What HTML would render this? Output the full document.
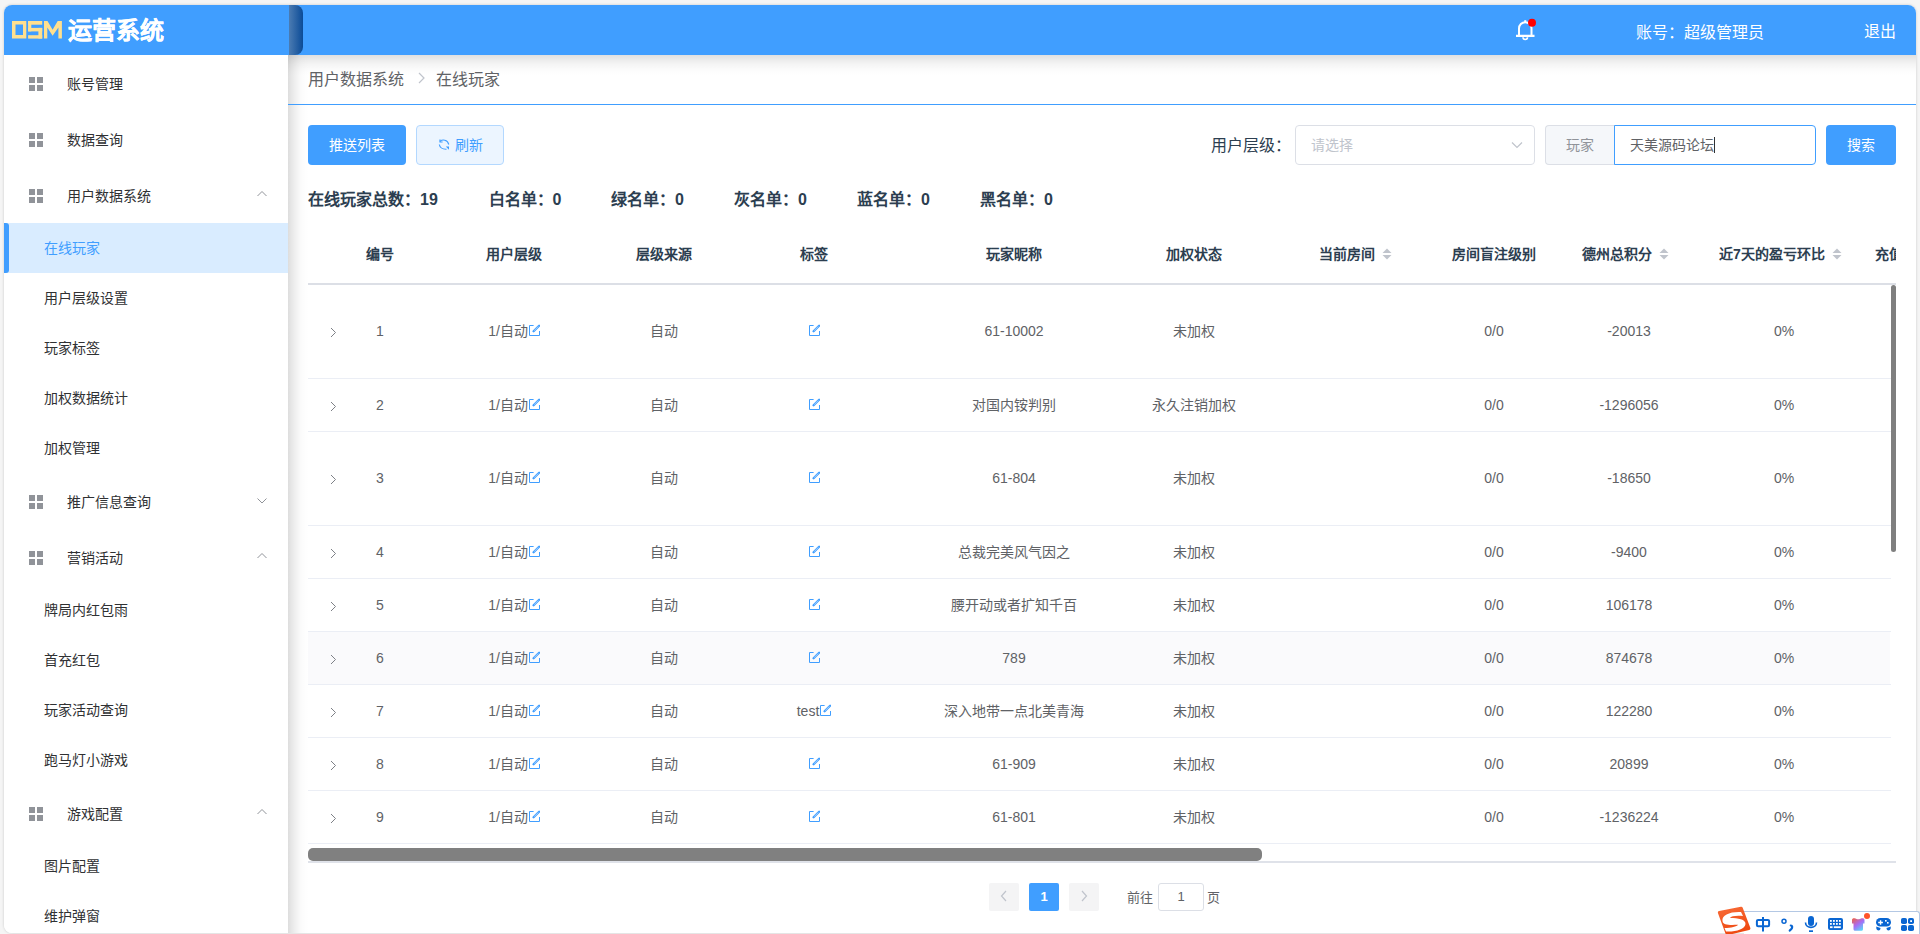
<!DOCTYPE html><html lang="zh-CN"><head><meta charset="utf-8"><style>
*{margin:0;padding:0;box-sizing:border-box}
html,body{width:1920px;height:934px;overflow:hidden;background:#f5f5f5;font-family:"Liberation Sans", sans-serif}
.abs{position:absolute}
#app{position:absolute;left:4px;top:5px;width:1912px;height:928px;background:#fff;border-radius:8px;overflow:hidden;box-shadow:0 0 3px rgba(0,0,0,.18)}
#hdr{position:absolute;left:0;top:0;width:1912px;height:50px;background:#409eff;z-index:3}
#side{position:absolute;left:0;top:50px;width:284px;height:878px;background:#fff;z-index:2}
.mi{position:absolute;left:0;width:284px;font-size:14px;color:#303133}
.mt{position:absolute;left:63px}
.si{position:absolute;left:0;width:284px;font-size:14px;color:#303133}
.st{position:absolute;left:40px}
#main{position:absolute;left:284px;top:50px;width:1628px;height:878px;background:#fff}
.btn{position:absolute;border-radius:4px;font-size:14px;text-align:center}
.cell{position:absolute;text-align:center;font-size:14px;color:#606266;white-space:nowrap}
.hc{position:absolute;text-align:center;font-size:14px;color:#2c3e50;font-weight:bold;white-space:nowrap}
.ed{display:inline-block;vertical-align:0px;margin-left:0}
.stat{position:absolute;top:0;font-size:16px;font-weight:bold;color:#2c3e50;white-space:nowrap}
.sort{display:inline-block;position:relative;width:24px;height:14px;vertical-align:middle}
</style></head><body>
<div id="app">
<div id="hdr">
<svg class="abs" style="left:8px;top:16px" width="50" height="18" viewBox="0 0 50 18"><g fill="#ffe08f"><path fill-rule="evenodd" d="M0 0 H14.3 V17.5 H0 Z M3.5 3.6 V13.9 H11 V3.6 Z"/><rect x="16.1" y="0" width="14.1" height="3.7"/><rect x="16.1" y="0" width="3.2" height="10.4"/><rect x="16.1" y="6.9" width="14.1" height="3.5"/><rect x="26.4" y="6.9" width="3.8" height="10.6"/><rect x="16.1" y="14.2" width="14.1" height="3.4"/><path d="M32 0 H35.5 L40.6 8.7 L45.7 0 H49.9 V17.6 H46.4 V6.5 L40.6 14.8 L35.3 6.5 V17.6 H32 Z"/></g></svg>
<div class="abs" style="left:64px;top:12px;font-size:24px;font-weight:bold;color:#fff;line-height:28px;-webkit-text-stroke:0.3px #fff">运营系统</div>
<div class="abs" style="left:285px;top:0;width:14px;height:50px;border-radius:0 8px 8px 0;background:linear-gradient(90deg,#4b7bb2,#0b4b97)"></div>
<svg class="abs" style="left:1510px;top:12px" width="24" height="28" viewBox="0 0 24 28"><path d="M5 18.5 V11.5 A6.25 6.25 0 0 1 17.5 11.5 V18.5" fill="none" stroke="#fff" stroke-width="2"/><rect x="10.25" y="3.2" width="2" height="2.6" fill="#fff"/><path d="M2 18.9 H20.5" stroke="#fff" stroke-width="2.2"/><path d="M9 20.2 A2.25 2.25 0 0 0 13.5 20.2" fill="none" stroke="#fff" stroke-width="1.6"/><circle cx="18" cy="5.8" r="4" fill="#f00"/></svg>
<div class="abs" style="left:1632px;top:18px;font-size:16px;color:#fff;line-height:20px">账号：超级管理员</div>
<div class="abs" style="left:1860px;top:17px;font-size:16px;color:#fff;line-height:20px">退出</div>
</div>
<div id="side">
<div class="mi" style="top:0px;height:56px;line-height:56px">
<svg style="position:absolute;left:25px;top:22px" width="14" height="14" viewBox="0 0 14 14"><rect x="0" y="0" width="6" height="6" fill="#909399"/><rect x="8" y="0" width="6" height="6" fill="#909399"/><rect x="0" y="8" width="6" height="6" fill="#909399"/><rect x="8" y="8" width="6" height="6" fill="#909399"/></svg>
<span class="mt" style="top:1px">账号管理</span>
</div>
<div class="mi" style="top:56px;height:56px;line-height:56px">
<svg style="position:absolute;left:25px;top:22px" width="14" height="14" viewBox="0 0 14 14"><rect x="0" y="0" width="6" height="6" fill="#909399"/><rect x="8" y="0" width="6" height="6" fill="#909399"/><rect x="0" y="8" width="6" height="6" fill="#909399"/><rect x="8" y="8" width="6" height="6" fill="#909399"/></svg>
<span class="mt" style="top:1px">数据查询</span>
</div>
<div class="mi" style="top:112px;height:56px;line-height:56px">
<svg style="position:absolute;left:25px;top:22px" width="14" height="14" viewBox="0 0 14 14"><rect x="0" y="0" width="6" height="6" fill="#909399"/><rect x="8" y="0" width="6" height="6" fill="#909399"/><rect x="0" y="8" width="6" height="6" fill="#909399"/><rect x="8" y="8" width="6" height="6" fill="#909399"/></svg>
<span class="mt" style="top:1px">用户数据系统</span>
<svg style="position:absolute;left:253px;top:24px" width="10" height="6" viewBox="0 0 10 6"><path d="M0.5 5 L5 0.5 L9.5 5" fill="none" stroke="#909399" stroke-width="1"/></svg>
</div>
<div class="si" style="top:168px;height:50px;line-height:50px;background:#d9ecff;color:#409eff"><div class="abs" style="left:0;top:0;width:5px;height:50px;background:#409eff;border-radius:0 3px 3px 0"></div><span class="st">在线玩家</span></div>
<div class="si" style="top:218px;height:50px;line-height:50px"><span class="st">用户层级设置</span></div>
<div class="si" style="top:268px;height:50px;line-height:50px"><span class="st">玩家标签</span></div>
<div class="si" style="top:318px;height:50px;line-height:50px"><span class="st">加权数据统计</span></div>
<div class="si" style="top:368px;height:50px;line-height:50px"><span class="st">加权管理</span></div>
<div class="mi" style="top:418px;height:56px;line-height:56px">
<svg style="position:absolute;left:25px;top:22px" width="14" height="14" viewBox="0 0 14 14"><rect x="0" y="0" width="6" height="6" fill="#909399"/><rect x="8" y="0" width="6" height="6" fill="#909399"/><rect x="0" y="8" width="6" height="6" fill="#909399"/><rect x="8" y="8" width="6" height="6" fill="#909399"/></svg>
<span class="mt" style="top:1px">推广信息查询</span>
<svg style="position:absolute;left:253px;top:25px" width="10" height="6" viewBox="0 0 10 6"><path d="M0.5 0.5 L5 5 L9.5 0.5" fill="none" stroke="#909399" stroke-width="1"/></svg>
</div>
<div class="mi" style="top:474px;height:56px;line-height:56px">
<svg style="position:absolute;left:25px;top:22px" width="14" height="14" viewBox="0 0 14 14"><rect x="0" y="0" width="6" height="6" fill="#909399"/><rect x="8" y="0" width="6" height="6" fill="#909399"/><rect x="0" y="8" width="6" height="6" fill="#909399"/><rect x="8" y="8" width="6" height="6" fill="#909399"/></svg>
<span class="mt" style="top:1px">营销活动</span>
<svg style="position:absolute;left:253px;top:24px" width="10" height="6" viewBox="0 0 10 6"><path d="M0.5 5 L5 0.5 L9.5 5" fill="none" stroke="#909399" stroke-width="1"/></svg>
</div>
<div class="si" style="top:530px;height:50px;line-height:50px"><span class="st">牌局内红包雨</span></div>
<div class="si" style="top:580px;height:50px;line-height:50px"><span class="st">首充红包</span></div>
<div class="si" style="top:630px;height:50px;line-height:50px"><span class="st">玩家活动查询</span></div>
<div class="si" style="top:680px;height:50px;line-height:50px"><span class="st">跑马灯小游戏</span></div>
<div class="mi" style="top:730px;height:56px;line-height:56px">
<svg style="position:absolute;left:25px;top:22px" width="14" height="14" viewBox="0 0 14 14"><rect x="0" y="0" width="6" height="6" fill="#909399"/><rect x="8" y="0" width="6" height="6" fill="#909399"/><rect x="0" y="8" width="6" height="6" fill="#909399"/><rect x="8" y="8" width="6" height="6" fill="#909399"/></svg>
<span class="mt" style="top:1px">游戏配置</span>
<svg style="position:absolute;left:253px;top:24px" width="10" height="6" viewBox="0 0 10 6"><path d="M0.5 5 L5 0.5 L9.5 5" fill="none" stroke="#909399" stroke-width="1"/></svg>
</div>
<div class="si" style="top:786px;height:50px;line-height:50px"><span class="st">图片配置</span></div>
<div class="si" style="top:836px;height:50px;line-height:50px"><span class="st">维护弹窗</span></div>
</div>
<div id="main">
<div class="abs" style="left:0;top:0;width:22px;height:878px;background:linear-gradient(to right,rgba(0,0,0,.135),rgba(0,0,0,.09) 4px,rgba(0,0,0,.055) 8px,rgba(0,0,0,.025) 12px,rgba(0,0,0,.008) 16px,rgba(0,0,0,0) 21px)"></div>
<div class="abs" style="left:0;top:0;width:1628px;height:22px;background:linear-gradient(to bottom,rgba(0,0,0,.12),rgba(0,0,0,.075) 5px,rgba(0,0,0,.045) 9px,rgba(0,0,0,.022) 13px,rgba(0,0,0,.008) 17px,rgba(0,0,0,0) 21px)"></div>
<div class="abs" style="left:20px;top:15px;font-size:16px;line-height:20px;color:#606266;white-space:nowrap">用户数据系统<svg style="display:inline-block;vertical-align:0px;margin:0 10px 0 14px" width="8" height="14" viewBox="0 0 8 14"><path d="M1 2 L6 7 L1 12" fill="none" stroke="#c0c4cc" stroke-width="1.2"/></svg>在线玩家</div>
<div class="abs" style="left:0;top:49px;width:1628px;height:1px;background:#409eff"></div>
<div class="btn" style="left:20px;top:70px;width:98px;height:40px;line-height:40px;background:#409eff;color:#fff">推送列表</div>
<div class="btn" style="left:128px;top:70px;width:88px;height:40px;line-height:38px;background:#ecf5ff;border:1px solid #b3d8ff;color:#409eff"><svg style="display:inline-block;vertical-align:0px;margin-right:5px" width="12" height="12" viewBox="0 0 12 12"><path d="M2 3.3 C4.5 1.2 9.5 1.5 10.8 6.5" fill="none" stroke="#409eff" stroke-width="1.1"/><path d="M2 1.5 V4 H4.6" fill="none" stroke="#409eff" stroke-width="1.2"/><path d="M1.3 6.5 C2 10.5 5 11.3 8.5 11.2" fill="none" stroke="#409eff" stroke-width="1.1"/><path d="M7.8 8.6 H11 V11.8 Z" fill="#409eff"/></svg>刷新</div>
<div class="abs" style="left:923px;top:81px;font-size:16px;line-height:20px;color:#2c3e50">用户层级：</div>
<div class="abs" style="left:1007px;top:70px;width:240px;height:40px;border:1px solid #dcdfe6;border-radius:4px;font-size:14px;line-height:38px;color:#c0c4cc;padding-left:15px">请选择<svg class="abs" style="right:11px;top:15px" width="12" height="8" viewBox="0 0 12 8"><path d="M1 1.5 L6 6.5 L11 1.5" fill="none" stroke="#c0c4cc" stroke-width="1.2"/></svg></div>
<div class="abs" style="left:1257px;top:70px;width:70px;height:40px;border:1px solid #dcdfe6;border-right:0;border-radius:4px 0 0 4px;background:#f5f7fa;font-size:14px;line-height:38px;color:#909399;text-align:center;padding-right:2px">玩家</div>
<div class="abs" style="left:1326px;top:70px;width:202px;height:40px;border:1px solid #409eff;border-radius:0 4px 4px 0;font-size:14px;line-height:38px;color:#606266;padding-left:15px">天美源码论坛<span style="display:inline-block;width:1px;height:16px;background:#303133;vertical-align:-3px"></span></div>
<div class="btn" style="left:1538px;top:70px;width:70px;height:40px;line-height:40px;background:#409eff;color:#fff">搜索</div>
<div class="stat" style="left:20px;top:135px;line-height:20px">在线玩家总数：19</div>
<div class="stat" style="left:200.5px;top:135px;line-height:20px">白名单：0</div>
<div class="stat" style="left:323px;top:135px;line-height:20px">绿名单：0</div>
<div class="stat" style="left:446px;top:135px;line-height:20px">灰名单：0</div>
<div class="stat" style="left:569px;top:135px;line-height:20px">蓝名单：0</div>
<div class="stat" style="left:692px;top:135px;line-height:20px">黑名单：0</div>
<div class="hc" style="left:-8.0px;top:189px;width:200px;line-height:20px">编号</div>
<div class="hc" style="left:126.0px;top:189px;width:200px;line-height:20px">用户层级</div>
<div class="hc" style="left:276.0px;top:189px;width:200px;line-height:20px">层级来源</div>
<div class="hc" style="left:426.0px;top:189px;width:200px;line-height:20px">标签</div>
<div class="hc" style="left:626.0px;top:189px;width:200px;line-height:20px">玩家昵称</div>
<div class="hc" style="left:806.0px;top:189px;width:200px;line-height:20px">加权状态</div>
<div class="hc" style="left:970.5px;top:189px;width:200px;line-height:20px">当前房间<span class="sort"><svg style="position:absolute;left:7px;top:0px" width="10" height="12" viewBox="0 0 10 12"><path d="M5 0.5 L9.5 5 H0.5 Z" fill="#c0c4cc"/><path d="M5 11.5 L9.5 7 H0.5 Z" fill="#c0c4cc"/></svg></span></div>
<div class="hc" style="left:1106.0px;top:189px;width:200px;line-height:20px">房间盲注级别</div>
<div class="hc" style="left:1241.0px;top:189px;width:200px;line-height:20px">德州总积分<span class="sort"><svg style="position:absolute;left:7px;top:0px" width="10" height="12" viewBox="0 0 10 12"><path d="M5 0.5 L9.5 5 H0.5 Z" fill="#c0c4cc"/><path d="M5 11.5 L9.5 7 H0.5 Z" fill="#c0c4cc"/></svg></span></div>
<div class="hc" style="left:1396.0px;top:189px;width:200px;line-height:20px">近7天的盈亏环比<span class="sort"><svg style="position:absolute;left:7px;top:0px" width="10" height="12" viewBox="0 0 10 12"><path d="M5 0.5 L9.5 5 H0.5 Z" fill="#c0c4cc"/><path d="M5 11.5 L9.5 7 H0.5 Z" fill="#c0c4cc"/></svg></span></div>
<div class="hc" style="left:1587px;top:189px;width:21px;overflow:hidden;text-align:left;line-height:20px">充值</div>
<div class="abs" style="left:20px;top:228px;width:1588px;height:2px;background:#dcdfe6"></div>
<div class="abs" style="left:20px;top:323px;width:1583px;height:1px;background:#ebeef5"></div>
<svg class="abs" style="left:42px;top:272.0px" width="7" height="11" viewBox="0 0 7 11"><path d="M1 1 L5.5 5.5 L1 10" fill="none" stroke="#7d8086" stroke-width="1"/></svg>
<div class="cell" style="left:62.0px;top:266.0px;width:60px;line-height:20px">1</div>
<div class="cell" style="left:116.0px;top:266.0px;width:220px;line-height:20px"><span>1/</span>自动<svg class="ed" width="12" height="12" viewBox="0 0 12 12"><path d="M5.6 1.5 H1.5 V11.5 H11.5 V7" fill="none" stroke="#409eff" stroke-width="1"/><path d="M5.6 7.2 L11.1 1.8" fill="none" stroke="#409eff" stroke-width="2.3" stroke-linecap="round"/><path d="M6.2 6.6 L10.5 2.4" fill="none" stroke="#cfe5ff" stroke-width="0.7"/></svg></div>
<div class="cell" style="left:266.0px;top:266.0px;width:220px;line-height:20px">自动</div>
<div class="cell" style="left:416.0px;top:266.0px;width:220px;line-height:20px"><svg class="ed" width="12" height="12" viewBox="0 0 12 12"><path d="M5.6 1.5 H1.5 V11.5 H11.5 V7" fill="none" stroke="#409eff" stroke-width="1"/><path d="M5.6 7.2 L11.1 1.8" fill="none" stroke="#409eff" stroke-width="2.3" stroke-linecap="round"/><path d="M6.2 6.6 L10.5 2.4" fill="none" stroke="#cfe5ff" stroke-width="0.7"/></svg></div>
<div class="cell" style="left:616.0px;top:266.0px;width:220px;line-height:20px">61-10002</div>
<div class="cell" style="left:796.0px;top:266.0px;width:220px;line-height:20px">未加权</div>
<div class="cell" style="left:1096.0px;top:266.0px;width:220px;line-height:20px">0/0</div>
<div class="cell" style="left:1231.0px;top:266.0px;width:220px;line-height:20px">-20013</div>
<div class="cell" style="left:1386.0px;top:266.0px;width:220px;line-height:20px">0%</div>
<div class="abs" style="left:20px;top:376px;width:1583px;height:1px;background:#ebeef5"></div>
<svg class="abs" style="left:42px;top:345.5px" width="7" height="11" viewBox="0 0 7 11"><path d="M1 1 L5.5 5.5 L1 10" fill="none" stroke="#7d8086" stroke-width="1"/></svg>
<div class="cell" style="left:62.0px;top:339.5px;width:60px;line-height:20px">2</div>
<div class="cell" style="left:116.0px;top:339.5px;width:220px;line-height:20px"><span>1/</span>自动<svg class="ed" width="12" height="12" viewBox="0 0 12 12"><path d="M5.6 1.5 H1.5 V11.5 H11.5 V7" fill="none" stroke="#409eff" stroke-width="1"/><path d="M5.6 7.2 L11.1 1.8" fill="none" stroke="#409eff" stroke-width="2.3" stroke-linecap="round"/><path d="M6.2 6.6 L10.5 2.4" fill="none" stroke="#cfe5ff" stroke-width="0.7"/></svg></div>
<div class="cell" style="left:266.0px;top:339.5px;width:220px;line-height:20px">自动</div>
<div class="cell" style="left:416.0px;top:339.5px;width:220px;line-height:20px"><svg class="ed" width="12" height="12" viewBox="0 0 12 12"><path d="M5.6 1.5 H1.5 V11.5 H11.5 V7" fill="none" stroke="#409eff" stroke-width="1"/><path d="M5.6 7.2 L11.1 1.8" fill="none" stroke="#409eff" stroke-width="2.3" stroke-linecap="round"/><path d="M6.2 6.6 L10.5 2.4" fill="none" stroke="#cfe5ff" stroke-width="0.7"/></svg></div>
<div class="cell" style="left:616.0px;top:339.5px;width:220px;line-height:20px">对国内铵判别</div>
<div class="cell" style="left:796.0px;top:339.5px;width:220px;line-height:20px">永久注销加权</div>
<div class="cell" style="left:1096.0px;top:339.5px;width:220px;line-height:20px">0/0</div>
<div class="cell" style="left:1231.0px;top:339.5px;width:220px;line-height:20px">-1296056</div>
<div class="cell" style="left:1386.0px;top:339.5px;width:220px;line-height:20px">0%</div>
<div class="abs" style="left:20px;top:470px;width:1583px;height:1px;background:#ebeef5"></div>
<svg class="abs" style="left:42px;top:419.0px" width="7" height="11" viewBox="0 0 7 11"><path d="M1 1 L5.5 5.5 L1 10" fill="none" stroke="#7d8086" stroke-width="1"/></svg>
<div class="cell" style="left:62.0px;top:413.0px;width:60px;line-height:20px">3</div>
<div class="cell" style="left:116.0px;top:413.0px;width:220px;line-height:20px"><span>1/</span>自动<svg class="ed" width="12" height="12" viewBox="0 0 12 12"><path d="M5.6 1.5 H1.5 V11.5 H11.5 V7" fill="none" stroke="#409eff" stroke-width="1"/><path d="M5.6 7.2 L11.1 1.8" fill="none" stroke="#409eff" stroke-width="2.3" stroke-linecap="round"/><path d="M6.2 6.6 L10.5 2.4" fill="none" stroke="#cfe5ff" stroke-width="0.7"/></svg></div>
<div class="cell" style="left:266.0px;top:413.0px;width:220px;line-height:20px">自动</div>
<div class="cell" style="left:416.0px;top:413.0px;width:220px;line-height:20px"><svg class="ed" width="12" height="12" viewBox="0 0 12 12"><path d="M5.6 1.5 H1.5 V11.5 H11.5 V7" fill="none" stroke="#409eff" stroke-width="1"/><path d="M5.6 7.2 L11.1 1.8" fill="none" stroke="#409eff" stroke-width="2.3" stroke-linecap="round"/><path d="M6.2 6.6 L10.5 2.4" fill="none" stroke="#cfe5ff" stroke-width="0.7"/></svg></div>
<div class="cell" style="left:616.0px;top:413.0px;width:220px;line-height:20px">61-804</div>
<div class="cell" style="left:796.0px;top:413.0px;width:220px;line-height:20px">未加权</div>
<div class="cell" style="left:1096.0px;top:413.0px;width:220px;line-height:20px">0/0</div>
<div class="cell" style="left:1231.0px;top:413.0px;width:220px;line-height:20px">-18650</div>
<div class="cell" style="left:1386.0px;top:413.0px;width:220px;line-height:20px">0%</div>
<div class="abs" style="left:20px;top:523px;width:1583px;height:1px;background:#ebeef5"></div>
<svg class="abs" style="left:42px;top:492.5px" width="7" height="11" viewBox="0 0 7 11"><path d="M1 1 L5.5 5.5 L1 10" fill="none" stroke="#7d8086" stroke-width="1"/></svg>
<div class="cell" style="left:62.0px;top:486.5px;width:60px;line-height:20px">4</div>
<div class="cell" style="left:116.0px;top:486.5px;width:220px;line-height:20px"><span>1/</span>自动<svg class="ed" width="12" height="12" viewBox="0 0 12 12"><path d="M5.6 1.5 H1.5 V11.5 H11.5 V7" fill="none" stroke="#409eff" stroke-width="1"/><path d="M5.6 7.2 L11.1 1.8" fill="none" stroke="#409eff" stroke-width="2.3" stroke-linecap="round"/><path d="M6.2 6.6 L10.5 2.4" fill="none" stroke="#cfe5ff" stroke-width="0.7"/></svg></div>
<div class="cell" style="left:266.0px;top:486.5px;width:220px;line-height:20px">自动</div>
<div class="cell" style="left:416.0px;top:486.5px;width:220px;line-height:20px"><svg class="ed" width="12" height="12" viewBox="0 0 12 12"><path d="M5.6 1.5 H1.5 V11.5 H11.5 V7" fill="none" stroke="#409eff" stroke-width="1"/><path d="M5.6 7.2 L11.1 1.8" fill="none" stroke="#409eff" stroke-width="2.3" stroke-linecap="round"/><path d="M6.2 6.6 L10.5 2.4" fill="none" stroke="#cfe5ff" stroke-width="0.7"/></svg></div>
<div class="cell" style="left:616.0px;top:486.5px;width:220px;line-height:20px">总裁完美风气因之</div>
<div class="cell" style="left:796.0px;top:486.5px;width:220px;line-height:20px">未加权</div>
<div class="cell" style="left:1096.0px;top:486.5px;width:220px;line-height:20px">0/0</div>
<div class="cell" style="left:1231.0px;top:486.5px;width:220px;line-height:20px">-9400</div>
<div class="cell" style="left:1386.0px;top:486.5px;width:220px;line-height:20px">0%</div>
<div class="abs" style="left:20px;top:576px;width:1583px;height:1px;background:#ebeef5"></div>
<svg class="abs" style="left:42px;top:545.5px" width="7" height="11" viewBox="0 0 7 11"><path d="M1 1 L5.5 5.5 L1 10" fill="none" stroke="#7d8086" stroke-width="1"/></svg>
<div class="cell" style="left:62.0px;top:539.5px;width:60px;line-height:20px">5</div>
<div class="cell" style="left:116.0px;top:539.5px;width:220px;line-height:20px"><span>1/</span>自动<svg class="ed" width="12" height="12" viewBox="0 0 12 12"><path d="M5.6 1.5 H1.5 V11.5 H11.5 V7" fill="none" stroke="#409eff" stroke-width="1"/><path d="M5.6 7.2 L11.1 1.8" fill="none" stroke="#409eff" stroke-width="2.3" stroke-linecap="round"/><path d="M6.2 6.6 L10.5 2.4" fill="none" stroke="#cfe5ff" stroke-width="0.7"/></svg></div>
<div class="cell" style="left:266.0px;top:539.5px;width:220px;line-height:20px">自动</div>
<div class="cell" style="left:416.0px;top:539.5px;width:220px;line-height:20px"><svg class="ed" width="12" height="12" viewBox="0 0 12 12"><path d="M5.6 1.5 H1.5 V11.5 H11.5 V7" fill="none" stroke="#409eff" stroke-width="1"/><path d="M5.6 7.2 L11.1 1.8" fill="none" stroke="#409eff" stroke-width="2.3" stroke-linecap="round"/><path d="M6.2 6.6 L10.5 2.4" fill="none" stroke="#cfe5ff" stroke-width="0.7"/></svg></div>
<div class="cell" style="left:616.0px;top:539.5px;width:220px;line-height:20px">腰开动或者扩知千百</div>
<div class="cell" style="left:796.0px;top:539.5px;width:220px;line-height:20px">未加权</div>
<div class="cell" style="left:1096.0px;top:539.5px;width:220px;line-height:20px">0/0</div>
<div class="cell" style="left:1231.0px;top:539.5px;width:220px;line-height:20px">106178</div>
<div class="cell" style="left:1386.0px;top:539.5px;width:220px;line-height:20px">0%</div>
<div class="abs" style="left:20px;top:577px;width:1582px;height:52px;background:#fafafc"></div>
<div class="abs" style="left:20px;top:629px;width:1583px;height:1px;background:#ebeef5"></div>
<svg class="abs" style="left:42px;top:598.5px" width="7" height="11" viewBox="0 0 7 11"><path d="M1 1 L5.5 5.5 L1 10" fill="none" stroke="#7d8086" stroke-width="1"/></svg>
<div class="cell" style="left:62.0px;top:592.5px;width:60px;line-height:20px">6</div>
<div class="cell" style="left:116.0px;top:592.5px;width:220px;line-height:20px"><span>1/</span>自动<svg class="ed" width="12" height="12" viewBox="0 0 12 12"><path d="M5.6 1.5 H1.5 V11.5 H11.5 V7" fill="none" stroke="#409eff" stroke-width="1"/><path d="M5.6 7.2 L11.1 1.8" fill="none" stroke="#409eff" stroke-width="2.3" stroke-linecap="round"/><path d="M6.2 6.6 L10.5 2.4" fill="none" stroke="#cfe5ff" stroke-width="0.7"/></svg></div>
<div class="cell" style="left:266.0px;top:592.5px;width:220px;line-height:20px">自动</div>
<div class="cell" style="left:416.0px;top:592.5px;width:220px;line-height:20px"><svg class="ed" width="12" height="12" viewBox="0 0 12 12"><path d="M5.6 1.5 H1.5 V11.5 H11.5 V7" fill="none" stroke="#409eff" stroke-width="1"/><path d="M5.6 7.2 L11.1 1.8" fill="none" stroke="#409eff" stroke-width="2.3" stroke-linecap="round"/><path d="M6.2 6.6 L10.5 2.4" fill="none" stroke="#cfe5ff" stroke-width="0.7"/></svg></div>
<div class="cell" style="left:616.0px;top:592.5px;width:220px;line-height:20px">789</div>
<div class="cell" style="left:796.0px;top:592.5px;width:220px;line-height:20px">未加权</div>
<div class="cell" style="left:1096.0px;top:592.5px;width:220px;line-height:20px">0/0</div>
<div class="cell" style="left:1231.0px;top:592.5px;width:220px;line-height:20px">874678</div>
<div class="cell" style="left:1386.0px;top:592.5px;width:220px;line-height:20px">0%</div>
<div class="abs" style="left:20px;top:682px;width:1583px;height:1px;background:#ebeef5"></div>
<svg class="abs" style="left:42px;top:651.5px" width="7" height="11" viewBox="0 0 7 11"><path d="M1 1 L5.5 5.5 L1 10" fill="none" stroke="#7d8086" stroke-width="1"/></svg>
<div class="cell" style="left:62.0px;top:645.5px;width:60px;line-height:20px">7</div>
<div class="cell" style="left:116.0px;top:645.5px;width:220px;line-height:20px"><span>1/</span>自动<svg class="ed" width="12" height="12" viewBox="0 0 12 12"><path d="M5.6 1.5 H1.5 V11.5 H11.5 V7" fill="none" stroke="#409eff" stroke-width="1"/><path d="M5.6 7.2 L11.1 1.8" fill="none" stroke="#409eff" stroke-width="2.3" stroke-linecap="round"/><path d="M6.2 6.6 L10.5 2.4" fill="none" stroke="#cfe5ff" stroke-width="0.7"/></svg></div>
<div class="cell" style="left:266.0px;top:645.5px;width:220px;line-height:20px">自动</div>
<div class="cell" style="left:416.0px;top:645.5px;width:220px;line-height:20px">test<svg class="ed" width="12" height="12" viewBox="0 0 12 12"><path d="M5.6 1.5 H1.5 V11.5 H11.5 V7" fill="none" stroke="#409eff" stroke-width="1"/><path d="M5.6 7.2 L11.1 1.8" fill="none" stroke="#409eff" stroke-width="2.3" stroke-linecap="round"/><path d="M6.2 6.6 L10.5 2.4" fill="none" stroke="#cfe5ff" stroke-width="0.7"/></svg></div>
<div class="cell" style="left:616.0px;top:645.5px;width:220px;line-height:20px">深入地带一点北美青海</div>
<div class="cell" style="left:796.0px;top:645.5px;width:220px;line-height:20px">未加权</div>
<div class="cell" style="left:1096.0px;top:645.5px;width:220px;line-height:20px">0/0</div>
<div class="cell" style="left:1231.0px;top:645.5px;width:220px;line-height:20px">122280</div>
<div class="cell" style="left:1386.0px;top:645.5px;width:220px;line-height:20px">0%</div>
<div class="abs" style="left:20px;top:735px;width:1583px;height:1px;background:#ebeef5"></div>
<svg class="abs" style="left:42px;top:704.5px" width="7" height="11" viewBox="0 0 7 11"><path d="M1 1 L5.5 5.5 L1 10" fill="none" stroke="#7d8086" stroke-width="1"/></svg>
<div class="cell" style="left:62.0px;top:698.5px;width:60px;line-height:20px">8</div>
<div class="cell" style="left:116.0px;top:698.5px;width:220px;line-height:20px"><span>1/</span>自动<svg class="ed" width="12" height="12" viewBox="0 0 12 12"><path d="M5.6 1.5 H1.5 V11.5 H11.5 V7" fill="none" stroke="#409eff" stroke-width="1"/><path d="M5.6 7.2 L11.1 1.8" fill="none" stroke="#409eff" stroke-width="2.3" stroke-linecap="round"/><path d="M6.2 6.6 L10.5 2.4" fill="none" stroke="#cfe5ff" stroke-width="0.7"/></svg></div>
<div class="cell" style="left:266.0px;top:698.5px;width:220px;line-height:20px">自动</div>
<div class="cell" style="left:416.0px;top:698.5px;width:220px;line-height:20px"><svg class="ed" width="12" height="12" viewBox="0 0 12 12"><path d="M5.6 1.5 H1.5 V11.5 H11.5 V7" fill="none" stroke="#409eff" stroke-width="1"/><path d="M5.6 7.2 L11.1 1.8" fill="none" stroke="#409eff" stroke-width="2.3" stroke-linecap="round"/><path d="M6.2 6.6 L10.5 2.4" fill="none" stroke="#cfe5ff" stroke-width="0.7"/></svg></div>
<div class="cell" style="left:616.0px;top:698.5px;width:220px;line-height:20px">61-909</div>
<div class="cell" style="left:796.0px;top:698.5px;width:220px;line-height:20px">未加权</div>
<div class="cell" style="left:1096.0px;top:698.5px;width:220px;line-height:20px">0/0</div>
<div class="cell" style="left:1231.0px;top:698.5px;width:220px;line-height:20px">20899</div>
<div class="cell" style="left:1386.0px;top:698.5px;width:220px;line-height:20px">0%</div>
<div class="abs" style="left:20px;top:788px;width:1583px;height:1px;background:#ebeef5"></div>
<svg class="abs" style="left:42px;top:757.5px" width="7" height="11" viewBox="0 0 7 11"><path d="M1 1 L5.5 5.5 L1 10" fill="none" stroke="#7d8086" stroke-width="1"/></svg>
<div class="cell" style="left:62.0px;top:751.5px;width:60px;line-height:20px">9</div>
<div class="cell" style="left:116.0px;top:751.5px;width:220px;line-height:20px"><span>1/</span>自动<svg class="ed" width="12" height="12" viewBox="0 0 12 12"><path d="M5.6 1.5 H1.5 V11.5 H11.5 V7" fill="none" stroke="#409eff" stroke-width="1"/><path d="M5.6 7.2 L11.1 1.8" fill="none" stroke="#409eff" stroke-width="2.3" stroke-linecap="round"/><path d="M6.2 6.6 L10.5 2.4" fill="none" stroke="#cfe5ff" stroke-width="0.7"/></svg></div>
<div class="cell" style="left:266.0px;top:751.5px;width:220px;line-height:20px">自动</div>
<div class="cell" style="left:416.0px;top:751.5px;width:220px;line-height:20px"><svg class="ed" width="12" height="12" viewBox="0 0 12 12"><path d="M5.6 1.5 H1.5 V11.5 H11.5 V7" fill="none" stroke="#409eff" stroke-width="1"/><path d="M5.6 7.2 L11.1 1.8" fill="none" stroke="#409eff" stroke-width="2.3" stroke-linecap="round"/><path d="M6.2 6.6 L10.5 2.4" fill="none" stroke="#cfe5ff" stroke-width="0.7"/></svg></div>
<div class="cell" style="left:616.0px;top:751.5px;width:220px;line-height:20px">61-801</div>
<div class="cell" style="left:796.0px;top:751.5px;width:220px;line-height:20px">未加权</div>
<div class="cell" style="left:1096.0px;top:751.5px;width:220px;line-height:20px">0/0</div>
<div class="cell" style="left:1231.0px;top:751.5px;width:220px;line-height:20px">-1236224</div>
<div class="cell" style="left:1386.0px;top:751.5px;width:220px;line-height:20px">0%</div>
<div class="abs" style="left:1603px;top:230px;width:5px;height:267px;background:#7f7f7f;border-radius:3px"></div>
<div class="abs" style="left:20px;top:793px;width:954px;height:13px;background:#808080;border-radius:5px"></div>
<div class="abs" style="left:20px;top:806px;width:1588px;height:2px;background:#dfe2e9"></div>
<div class="abs" style="left:701px;top:828px;width:30px;height:28px;background:#f4f4f5;color:#c0c4cc;border-radius:2px;text-align:center;line-height:28px;font-size:13px;font-weight:bold"><svg width="8" height="12" viewBox="0 0 8 12" style="vertical-align:-1px"><path d="M6 1 L1.5 6 L6 11" fill="none" stroke="#c0c4cc" stroke-width="1.2"/></svg></div>
<div class="abs" style="left:741px;top:828px;width:30px;height:28px;background:#409eff;color:#fff;border-radius:2px;text-align:center;line-height:28px;font-size:13px;font-weight:bold">1</div>
<div class="abs" style="left:781px;top:828px;width:30px;height:28px;background:#f4f4f5;color:#c0c4cc;border-radius:2px;text-align:center;line-height:28px;font-size:13px;font-weight:bold"><svg width="8" height="12" viewBox="0 0 8 12" style="vertical-align:-1px"><path d="M2 1 L6.5 6 L2 11" fill="none" stroke="#c0c4cc" stroke-width="1.2"/></svg></div>
<div class="abs" style="left:839px;top:833px;font-size:13px;line-height:20px;color:#606266">前往</div>
<div class="abs" style="left:870px;top:828px;width:46px;height:28px;border:1px solid #dcdfe6;border-radius:3px;font-size:13px;line-height:26px;color:#606266;text-align:center">1</div>
<div class="abs" style="left:919px;top:833px;font-size:13px;line-height:20px;color:#606266">页</div>
</div>
</div>
<div class="abs" style="left:1744px;top:911px;width:176px;height:23px;background:#fff;border-top:1px solid #b4c8e4;border-right:1px solid #b4c8e4;border-radius:0 3px 0 0"></div>
<svg class="abs" style="left:1712px;top:900px" width="44" height="34" viewBox="0 0 44 34"><defs><linearGradient id="sg" x1="0" y1="0" x2="0.3" y2="1"><stop offset="0" stop-color="#f76a36"/><stop offset="1" stop-color="#ef4a12"/></linearGradient></defs><path d="M7.5 12.6 L29.2 8.3 L36.8 28.4 L15.2 33.6 Z" fill="url(#sg)" stroke="url(#sg)" stroke-width="3.2" stroke-linejoin="round"/><path d="M10.5 21 C9.5 15 18 11.5 29 12 L31 16 C24 15.5 19 16 18 18 C26 18 34 19.5 33.5 24 C33 29 24 32 14 31.5 L12.5 28 C19 28 25 26.5 26 24.8 C18 25 11 25.5 10.5 21 Z" fill="#fff"/></svg>
<svg class="abs" style="left:1755px;top:916px" width="16" height="16" viewBox="0 0 16 16"><rect x="1.9" y="3.9" width="12.2" height="6.4" rx="1.2" fill="none" stroke="#0a66d2" stroke-width="2"/><rect x="7" y="1" width="2" height="14.5" fill="#0a66d2"/></svg>
<svg class="abs" style="left:1781px;top:918px" width="14" height="14" viewBox="0 0 14 14"><circle cx="3" cy="3.2" r="2" fill="none" stroke="#0a66d2" stroke-width="1.5"/><path d="M9.8 7.5 C11.5 7.5 11.5 9.5 10.3 11 L8.8 12.6" fill="none" stroke="#0a66d2" stroke-width="2.2" stroke-linecap="round"/></svg>
<svg class="abs" style="left:1804px;top:915px" width="14" height="18" viewBox="0 0 14 18"><rect x="4" y="1" width="6" height="10" rx="3" fill="#0a66d2"/><path d="M1.5 7.5 C1.5 14 12.5 14 12.5 7.5" fill="none" stroke="#0a66d2" stroke-width="1.6"/><rect x="5" y="15.3" width="4" height="1.7" fill="#0a66d2"/></svg>
<svg class="abs" style="left:1828px;top:918px" width="15" height="12" viewBox="0 0 15 12"><rect x="0" y="0" width="15" height="12" rx="2" fill="#0a66d2"/><g fill="#fff"><rect x="2" y="2" width="1.8" height="1.8"/><rect x="5" y="2" width="1.8" height="1.8"/><rect x="8" y="2" width="1.8" height="1.8"/><rect x="11" y="2" width="1.8" height="1.8"/><rect x="2" y="5" width="1.8" height="1.8"/><rect x="5" y="5" width="1.8" height="1.8"/><rect x="8" y="5" width="1.8" height="1.8"/><rect x="11" y="5" width="1.8" height="1.8"/><rect x="2" y="8.3" width="2.6" height="1.8"/><rect x="5.8" y="8.3" width="7" height="1.8"/></g></svg>
<svg class="abs" style="left:1851px;top:913px" width="20" height="19" viewBox="0 0 20 19"><defs><linearGradient id="sh" x1="0" y1="0" x2="0.7" y2="1"><stop offset="0" stop-color="#f4603a"/><stop offset="0.55" stop-color="#a66cf6"/><stop offset="1" stop-color="#5cd6f7"/></linearGradient></defs><path d="M1 7 C1 5 3 4.8 4.5 5.5 C5.5 6.5 9 6.5 10 5.5 C11.5 4.8 13.5 5 13.5 7 V10.5 H12 V16 C12 17.5 11 17.8 10 17.8 H4.5 C3.5 17.8 2.5 17.5 2.5 16 V10.5 H1 Z" fill="url(#sh)"/><circle cx="16" cy="3" r="3" fill="#ff5329"/></svg>
<svg class="abs" style="left:1876px;top:918px" width="15" height="13" viewBox="0 0 15 13"><rect x="0" y="0" width="15" height="8.6" rx="4.3" fill="#0a66d2"/><path d="M0.2 8.5 C0 11.5 1.5 12.5 2.5 12.5 C3.8 12.5 4.5 11.5 4.5 10 Z" fill="#0a66d2"/><path d="M14.8 8.5 C15 11.5 13.5 12.5 12.5 12.5 C11.2 12.5 10.5 11.5 10.5 10 Z" fill="#0a66d2"/><path d="M2.2 4.5 H6.9 M4.55 2.3 V6.8" stroke="#fff" stroke-width="1.4"/><rect x="9" y="2" width="1.6" height="1.6" fill="#fff"/><rect x="11" y="4" width="1.6" height="1.6" fill="#fff"/></svg>
<svg class="abs" style="left:1901px;top:918px" width="13" height="13" viewBox="0 0 13 13"><rect x="0" y="0" width="6" height="6" rx="1.8" fill="#0a66d2"/><rect x="7" y="0" width="6" height="6" rx="1.8" fill="#0a66d2"/><rect x="0" y="7" width="6" height="6" rx="1.8" fill="#0a66d2"/><rect x="7" y="7" width="6" height="6" rx="1.8" fill="#0a66d2"/><rect x="9.2" y="2.2" width="1.8" height="1.8" fill="#fff"/></svg>
</body></html>
